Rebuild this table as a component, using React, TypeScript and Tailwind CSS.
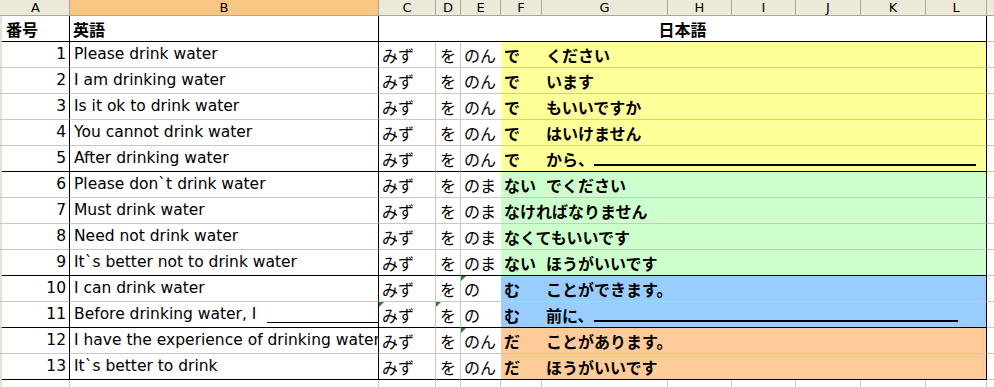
const latin = "font-['DejaVu_Sans','Noto_Sans_CJK_JP',sans-serif]";
const jp = "font-['Noto_Sans_CJK_JP',sans-serif]";

type Row = {
    n: number;
    en: string;
    enBlank?: boolean;
    e: string;
    f: string;
    g: string;
    blank?: number;
    fill: string;
    last?: boolean;
    flags?: string[];
};

const rows: Row[] = [
    { n: 1, en: "Please drink water", e: "のん", f: "で", g: "ください", fill: "bg-[#ffff99]" },
    { n: 2, en: "I am drinking water", e: "のん", f: "で", g: "います", fill: "bg-[#ffff99]" },
    { n: 3, en: "Is it ok to drink water", e: "のん", f: "で", g: "もいいですか", fill: "bg-[#ffff99]" },
    { n: 4, en: "You cannot drink water", e: "のん", f: "で", g: "はいけません", fill: "bg-[#ffff99]" },
    { n: 5, en: "After drinking water", e: "のん", f: "で", g: "から、", blank: 382, fill: "bg-[#ffff99]", last: true },
    { n: 6, en: "Please don`t drink water", e: "のま", f: "ない", g: "でください", fill: "bg-[#ccffcc]" },
    { n: 7, en: "Must drink water", e: "のま", f: "なければなりません", g: "", fill: "bg-[#ccffcc]" },
    { n: 8, en: "Need not drink water", e: "のま", f: "なくてもいいです", g: "", fill: "bg-[#ccffcc]" },
    { n: 9, en: "It`s better not to drink water", e: "のま", f: "ない", g: "ほうがいいです", fill: "bg-[#ccffcc]", last: true },
    { n: 10, en: "I can drink water", e: "の", f: "む", g: "ことができます。", fill: "bg-[#99ccff]", flags: ["e"] },
    { n: 11, en: "Before drinking water, I", enBlank: true, e: "の", f: "む", g: "前に、", blank: 364, fill: "bg-[#99ccff]", last: true, flags: ["c", "d"] },
    { n: 12, en: "I have the experience of drinking water", e: "のん", f: "だ", g: "ことがあります。", fill: "bg-[#ffcc99]", flags: ["e"] },
    { n: 13, en: "It`s better to drink", e: "のん", f: "だ", g: "ほうがいいです", fill: "bg-[#ffcc99]", last: true },
];

const cols = [
    { l: "A", w: "w-[68px]" },
    { l: "B", w: "w-[309px]" },
    { l: "C", w: "w-[57px]" },
    { l: "D", w: "w-[25px]" },
    { l: "E", w: "w-[40px]" },
    { l: "F", w: "w-[41px]" },
    { l: "G", w: "w-[126px]" },
    { l: "H", w: "w-[64px]" },
    { l: "I", w: "w-[64px]" },
    { l: "J", w: "w-[65px]" },
    { l: "K", w: "w-[65px]" },
    { l: "L", w: "w-[61px]" },
];

function Flag() {
    return (
        <span className="absolute left-0 top-0 h-0 w-0 border-r-[5px] border-t-[5px] border-r-transparent border-t-[#1f8a1f]" />
    );
}

export default function App() {
    return (
        <div className="h-[387px] w-[994px] overflow-hidden bg-white text-black">
            {/* column headers */}
            <div className={`flex h-[16px] ${latin} text-[13px] leading-[15px]`}>
                <div className="w-[2px] shrink-0 border-b border-[#aca899] bg-[#ece9d8]" />
                {cols.map((c) => (
                    <div
                        key={c.l}
                        className={`${c.w} shrink-0 border-b border-r border-[#aca899] text-center ${
                            c.l === "B" ? "bg-[#f9c783]" : "bg-[#ece9d8]"
                        }`}
                    >
                        {c.l}
                    </div>
                ))}
                <div className="flex-1 border-b border-[#aca899] bg-[#ece9d8]" />
            </div>

            {/* title row */}
            <div className={`flex h-[26px] ${jp} text-[16px] font-bold`}>
                <div className="w-[2px] shrink-0 border-b border-[#c0c0c0] bg-[#e4e2d6]" />
                <div className="flex w-[68px] shrink-0 items-center border-b border-r border-black pl-[4px]">番号</div>
                <div className="flex w-[309px] shrink-0 items-center border-b border-r border-black pl-[3px]">英語</div>
                <div className="flex w-[608px] shrink-0 items-center justify-center border-b border-r border-black">
                    日本語
                </div>
                <div className="flex-1 border-b border-[#c0c0c0]" />
            </div>

            {rows.map((r) => {
                const line = r.last ? "border-b-black" : "border-b-[#c8c8c8]";
                return (
                    <div key={r.n} className="flex h-[26px] text-[16px]">
                        <div className="w-[2px] shrink-0 border-b border-[#c0c0c0] bg-[#e4e2d6]" />
                        <div
                            className={`flex w-[68px] shrink-0 items-center justify-end border-b border-r border-r-black ${line} pr-[3px] ${latin} text-[15.5px]`}
                        >
                            {r.n}
                        </div>
                        <div
                            className={`flex w-[309px] shrink-0 items-center overflow-hidden whitespace-nowrap border-b border-r border-r-black ${line} pl-[4px] ${latin} text-[15.5px]`}
                        >
                            {r.en}
                            {r.enBlank && (
                                <span className="ml-[11px] inline-block h-[16px] w-[120px] shrink-0 border-b border-black" />
                            )}
                        </div>
                        <div
                            className={`relative flex w-[57px] shrink-0 items-center border-b border-r border-r-[#c8c8c8] ${line} pl-[3px] ${jp}`}
                        >
                            {r.flags?.includes("c") && <Flag />}
                            みず
                        </div>
                        <div
                            className={`relative flex w-[25px] shrink-0 items-center border-b border-r border-r-[#c8c8c8] ${line} pl-[4px] ${jp}`}
                        >
                            {r.flags?.includes("d") && <Flag />}を
                        </div>
                        <div
                            className={`relative flex w-[40px] shrink-0 items-center whitespace-nowrap border-b ${line} pl-[3px] ${jp}`}
                        >
                            {r.flags?.includes("e") && <Flag />}
                            {r.e}
                        </div>
                        <div
                            className={`flex w-[486px] shrink-0 items-center whitespace-nowrap border-b border-r border-r-black ${line} ${r.fill} ${jp} font-bold`}
                        >
                            <span className={r.g ? "w-[41px] shrink-0 pl-[3px]" : "pl-[3px]"}>{r.f}</span>
                            {r.g && <span className="pl-[4px]">{r.g}</span>}
                            {r.blank && (
                                <span
                                    style={{ width: r.blank }}
                                    className="inline-block h-[15px] shrink-0 border-b-2 border-black"
                                />
                            )}
                        </div>
                        <div className="flex-1 border-b border-[#c8c8c8]" />
                    </div>
                );
            })}

            <div className="flex h-[7px]">
                <div className="w-[2px] shrink-0 bg-[#e4e2d6]" />
                <div className="w-[68px] shrink-0 border-r border-[#c8c8c8]" />
                <div className="w-[309px] shrink-0 border-r border-[#c8c8c8]" />
                <div className="w-[57px] shrink-0 border-r border-[#c8c8c8]" />
                <div className="w-[25px] shrink-0 border-r border-[#c8c8c8]" />
                <div className="w-[40px] shrink-0 border-r border-[#c8c8c8]" />
                <div className="w-[41px] shrink-0 border-r border-[#c8c8c8]" />
                <div className="w-[126px] shrink-0 border-r border-[#c8c8c8]" />
                <div className="w-[64px] shrink-0 border-r border-[#c8c8c8]" />
                <div className="w-[64px] shrink-0 border-r border-[#c8c8c8]" />
                <div className="w-[65px] shrink-0 border-r border-[#c8c8c8]" />
                <div className="w-[65px] shrink-0 border-r border-[#c8c8c8]" />
                <div className="w-[61px] shrink-0 border-r border-[#c8c8c8]" />
            </div>
        </div>
    );
}
